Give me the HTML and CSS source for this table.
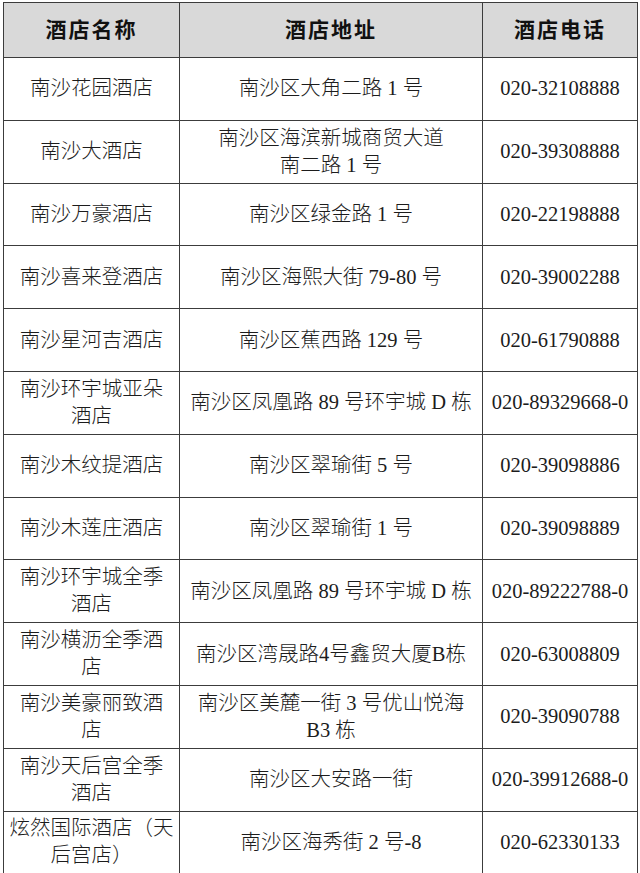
FILE: index.html
```html
<!DOCTYPE html>
<html lang="zh-CN">
<head>
<meta charset="utf-8">
<title>南沙酒店</title>
<link rel="stylesheet" href="styles.css">
</head>
<body>
<table class="hotels">
  <colgroup>
    <col class="c-name">
    <col class="c-addr">
    <col class="c-tel">
  </colgroup>
  <thead>
    <tr class="head"><th>酒店名称</th><th>酒店地址</th><th>酒店电话</th></tr>
  </thead>
  <tbody>
    <tr><td>南沙花园酒店</td><td>南沙区大角二路 1 号</td><td class="tel">020-32108888</td></tr>
    <tr><td>南沙大酒店</td><td>南沙区海滨新城商贸大道<br>南二路 1 号</td><td class="tel">020-39308888</td></tr>
    <tr><td>南沙万豪酒店</td><td>南沙区绿金路 1 号</td><td class="tel">020-22198888</td></tr>
    <tr><td>南沙喜来登酒店</td><td>南沙区海熙大街 79-80 号</td><td class="tel">020-39002288</td></tr>
    <tr><td>南沙星河吉酒店</td><td>南沙区蕉西路 129 号</td><td class="tel">020-61790888</td></tr>
    <tr><td>南沙环宇城亚朵<br>酒店</td><td>南沙区凤凰路 89 号环宇城 D 栋</td><td class="tel">020-89329668-0</td></tr>
    <tr><td>南沙木纹提酒店</td><td>南沙区翠瑜街 5 号</td><td class="tel">020-39098886</td></tr>
    <tr><td>南沙木莲庄酒店</td><td>南沙区翠瑜街 1 号</td><td class="tel">020-39098889</td></tr>
    <tr><td>南沙环宇城全季<br>酒店</td><td>南沙区凤凰路 89 号环宇城 D 栋</td><td class="tel">020-89222788-0</td></tr>
    <tr><td>南沙横沥全季酒<br>店</td><td>南沙区湾晟路4号鑫贸大厦B栋</td><td class="tel">020-63008809</td></tr>
    <tr><td>南沙美豪丽致酒<br>店</td><td>南沙区美麓一街 3 号优山悦海<br>B3 栋</td><td class="tel">020-39090788</td></tr>
    <tr><td>南沙天后宫全季<br>酒店</td><td>南沙区大安路一街</td><td class="tel">020-39912688-0</td></tr>
    <tr><td>炫然国际酒店（天<br>后宫店）</td><td>南沙区海秀街 2 号-8</td><td class="tel">020-62330133</td></tr>
  </tbody>
</table>
</body>
</html>
```
FILE: styles.css
```css
html, body {
  margin: 0;
  padding: 0;
  background: #ffffff;
  overflow: hidden;
}

body {
  padding: 2px 0 0 3px;
  font-family: "Liberation Serif", "Noto Sans CJK SC", serif;
  color: #1c1c1c;
}

.hotels {
  border-collapse: collapse;
  table-layout: fixed;
  width: 634px;
}

.c-name { width: 176px; }
.c-addr { width: 303px; }
.c-tel { width: 155px; }

.hotels th,
.hotels td {
  border: 1px solid #3c3c3c;
  text-align: center;
  vertical-align: middle;
  padding: 0 2px;
  font-size: 20.5px;
  line-height: 27px;
  white-space: nowrap;
}

.hotels td {
  font-weight: 300;
  height: 61.8px;
}

.head th {
  background: #d9d9d9;
  height: 54px;
  font-weight: 700;
  font-size: 21px;
  letter-spacing: 2px;
  color: #111111;
}

.hotels td.tel {
  font-weight: 400;
}
```
